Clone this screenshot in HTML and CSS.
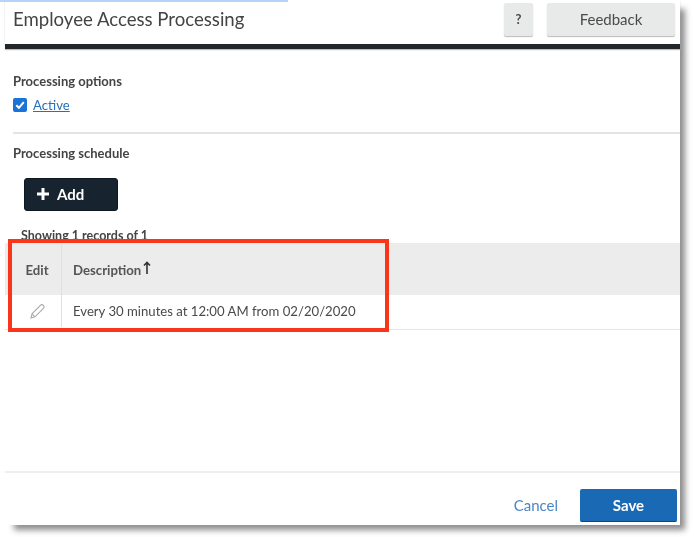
FILE: index.html
```html
<!DOCTYPE html>
<html lang="en">
<head>
<meta charset="utf-8">
<title>Employee Access Processing</title>
<link rel="stylesheet" href="styles.css">
</head>
<body>
<div class="strip"></div>
<main class="dialog">
  <header class="head">
    <h1 class="title">Employee Access Processing</h1>
    <button class="btn-grey btn-help">?</button>
    <button class="btn-grey btn-feedback">Feedback</button>
  </header>
  <div class="content">
    <section class="options">
      <h2 class="label">Processing options</h2>
      <label class="check">
        <span class="box"><svg width="10" height="10" viewBox="0 0 10 10"><path d="M1.3 5.2 L3.9 7.8 L8.8 2.2" fill="none" stroke="#fff" stroke-width="2"/></svg></span>
        <span class="link">Active</span>
      </label>
    </section>
    <section class="schedule">
      <h2 class="label">Processing schedule</h2>
      <button class="btn-add"><svg width="14" height="14" viewBox="0 0 14 14"><path d="M7 1 V13 M1 7 H13" stroke="#fff" stroke-width="3"/></svg>Add</button>
      <p class="count">Showing 1 records of 1</p>
      <div class="table">
        <div class="row row-head">
          <div class="cell-edit">Edit</div>
          <div class="cell-desc">Description<svg class="sort" width="8" height="13" viewBox="0 0 8 13"><path d="M4 13 V1.5 M1 4.5 L4 1.5 L7 4.5" fill="none" stroke="#333" stroke-width="1.6"/></svg></div>
        </div>
        <div class="row row-body">
          <div class="cell-edit"><svg width="17" height="17" viewBox="0 0 17 17"><path d="M2 15 L3 10.8 L11.6 2.2 C12.4 1.4 13.4 1.4 14.4 2.4 C15.4 3.4 15.4 4.4 14.6 5.2 L6 13.8 Z M3 10.8 L6 13.8" fill="none" stroke="#a9a9a9" stroke-width="1.1"/></svg></div>
          <div class="cell-desc">Every 30 minutes at 12:00 AM from 02/20/2020</div>
        </div>
      </div>
    </section>
  </div>
  <footer class="foot">
    <a class="cancel">Cancel</a>
    <button class="btn-save">Save</button>
  </footer>
  <div class="highlight"></div>
</main>
</body>
</html>
```
FILE: styles.css
```css
* { box-sizing: border-box; }
html, body { margin: 0; height: 100%; background: #fff; overflow: hidden; }
body { position: relative; font-family: Lato, "Open Sans", sans-serif; color: #3f4447; }
.strip { position: absolute; left: 0; top: 0; width: 288px; height: 2px; background: #b5d4f7; z-index: 2; }
.dialog {
  position: relative; margin-left: 5px; width: 675px; height: 525px;
  background: #fff; display: flex; flex-direction: column;
  box-shadow: 7px 7px 6px -2px rgba(0,0,0,.45);
  filter: blur(.55px);
}
.head { height: 49px; flex: none; display: flex; align-items: flex-start; padding: 3px 5px 0 8px; border-bottom: 5px solid #22272b; box-shadow: 0 1px 1px #bbb; }
.title { margin: 0 auto 0 0; font-size: 18.6px; font-weight: 400; line-height: 33px; color: #444; }
.btn-grey { height: 33px; border: 0; border-radius: 2px; background: #e8e9e9; box-shadow: 0 1px 1px #bbb; font: 400 15px/31px Lato, sans-serif; color: #4a4a4a; padding: 0; }
.btn-help { width: 29px; margin-right: 14px; font-weight: 700; font-size: 13px; }
.btn-feedback { width: 128px; }
.content { flex: 1; display: flex; flex-direction: column; }
.options { height: 83px; flex: none; padding: 24px 8px 0; }
.label { margin: 0; font-size: 13px; font-weight: 700; line-height: 16px; color: #444; }
.check { display: flex; align-items: center; gap: 6px; margin-top: 8px; height: 16px; }
.box { width: 14px; height: 14px; border-radius: 2px; background: #1a73d9; display: flex; align-items: center; justify-content: center; }
.link { font-size: 13.2px; color: #2a6fbb; text-decoration: underline; }
.schedule { border-top: 2px solid #e4e4e4; margin-left: 8px; padding-top: 11px; flex: 1; }
.btn-add { display: flex; align-items: center; gap: 7px; margin: 17px 0 0 11px; width: 94px; height: 33px; padding: 0 0 1px 11px; border: 1px solid #0d1820; border-radius: 3px; background: #17232e; color: #fff; font: 700 15px Lato, sans-serif; }
.count { margin: 17px 0 0 8px; height: 15px; font-size: 12.5px; font-weight: 700; line-height: 15px; color: #444; }
.table { margin: 0 0 0 -8px; }
.row { display: flex; }
.row-head { height: 52px; background: #ececec; font-size: 13.2px; font-weight: 700; color: #555; align-items: stretch; padding-top: 1px; }
.row-body { height: 35px; font-size: 13.15px; color: #4a4a4a; border-bottom: 1px solid #e6e6e6; padding-bottom: 2px; }
.cell-edit { width: 57px; flex: none; display: flex; align-items: center; justify-content: center; padding-left: 8px; border-right: 1px solid #e0e0e0; }
.cell-desc { display: flex; align-items: center; padding-left: 11px; }
.sort { margin: -4px 0 0 2px; }
.foot { height: 54px; flex: none; display: flex; align-items: flex-end; justify-content: flex-end; gap: 22px; padding: 0 3px 3px 0; border-top: 2px solid #eeeeee; }
.cancel { font-size: 15px; line-height: 33px; color: #4a86c5; }
.btn-save { width: 97px; height: 33px; border: 0; border-bottom: 1px solid #0e4478; border-radius: 2px; background: #1a69b5; color: #fff; font: 700 15px Lato, sans-serif; }
.highlight { position: absolute; left: 3px; top: 239px; width: 381px; height: 93px; border: 4px solid #f9361a; }
```
